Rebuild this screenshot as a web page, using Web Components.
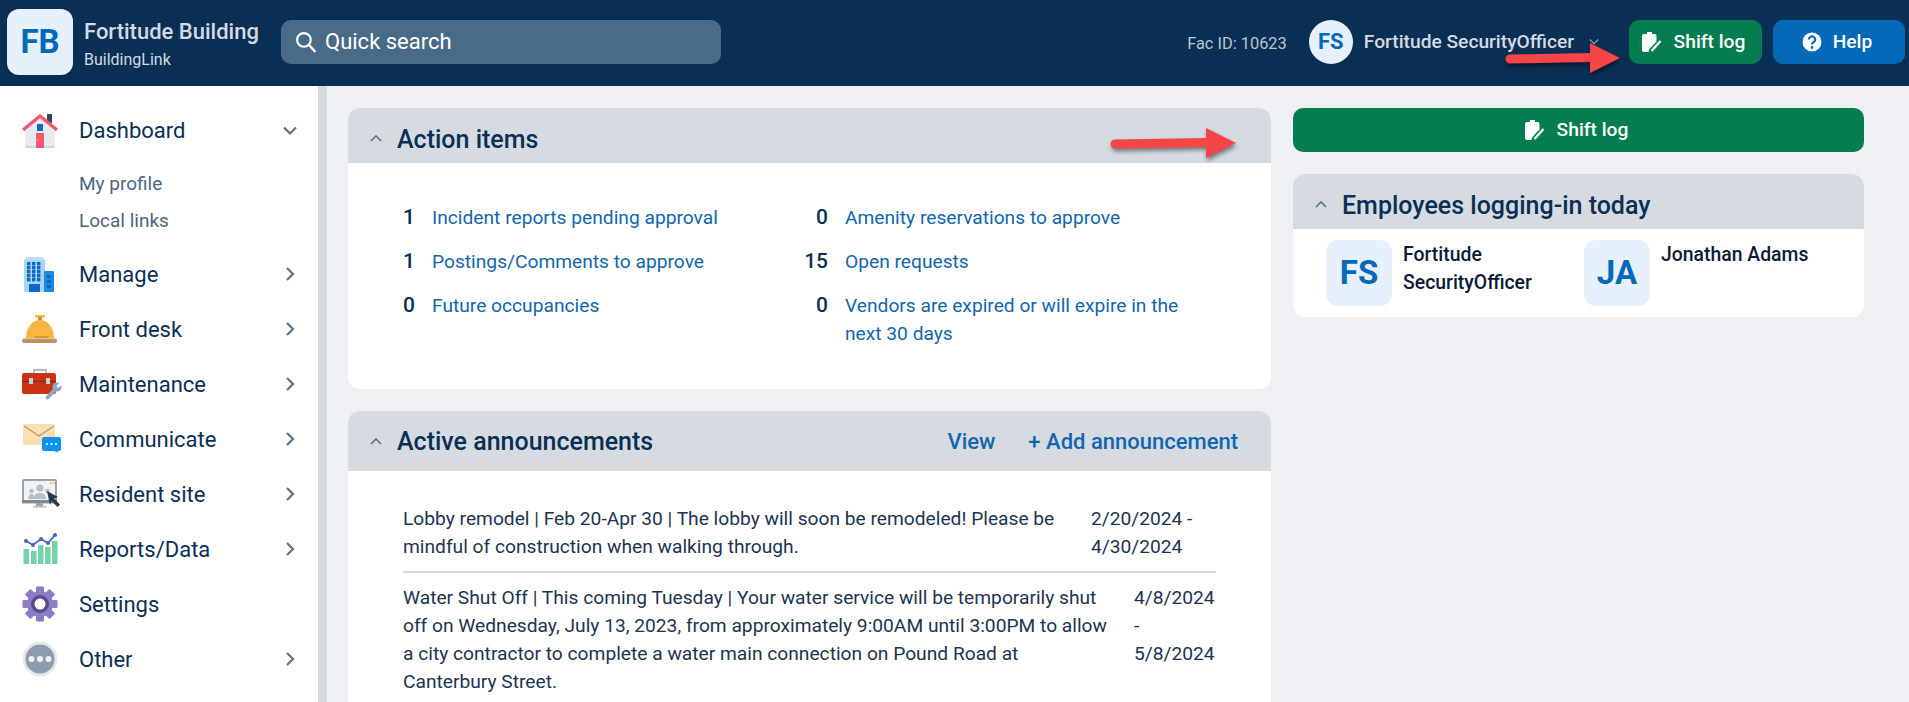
<!DOCTYPE html>
<html lang="en">
<head>
<meta charset="utf-8">
<title>BuildingLink dashboard</title>
<style>
  html, body { margin: 0; height: 702px; overflow: hidden; }
  body { font: 400 19.2px/28px Roboto, "Liberation Sans", sans-serif; color: #0a2f55; background: #eef0f4; }
</style>
</head>
<body>
<app-shell>
  <top-bar slot="top"></top-bar>
  <side-nav slot="side">
    <nav-item icon="house" open>Dashboard</nav-item>
    <sub-link first>My profile</sub-link>
    <sub-link last>Local links</sub-link>
    <nav-item icon="building" more>Manage</nav-item>
    <nav-item icon="bell" more>Front desk</nav-item>
    <nav-item icon="toolbox" more>Maintenance</nav-item>
    <nav-item icon="mail" more>Communicate</nav-item>
    <nav-item icon="monitor" more>Resident site</nav-item>
    <nav-item icon="chart" more>Reports/Data</nav-item>
    <nav-item icon="gear">Settings</nav-item>
    <nav-item icon="dots" more>Other</nav-item>
  </side-nav>

  <panel-card slot="left" heading="Action items">
    <action-grid>
      <action-item count="1">Incident reports pending approval</action-item>
      <action-item count="0">Amenity reservations to approve</action-item>
      <action-item count="1">Postings/Comments to approve</action-item>
      <action-item count="15">Open requests</action-item>
      <action-item count="0">Future occupancies</action-item>
      <action-item count="0">Vendors are expired or will expire in the next 30 days</action-item>
    </action-grid>
  </panel-card>

  <panel-card slot="left" heading="Active announcements" tall>
    <panel-link slot="actions">View</panel-link>
    <panel-link slot="actions">+ Add announcement</panel-link>
    <announce-list>
      <announce-row dates="2/20/2024 - 4/30/2024" datewidth="125" textwidth="678">Lobby remodel | Feb 20-Apr 30 | The lobby will soon be remodeled! Please be mindful of construction when walking through.</announce-row>
      <announce-row dates="4/8/2024 - 5/8/2024" datewidth="82" textwidth="710">Water Shut Off | This coming Tuesday | Your water service will be temporarily shut off on Wednesday, July 13, 2023, from approximately 9:00AM until 3:00PM to allow a city contractor to complete a water main connection on Pound Road at Canterbury Street.</announce-row>
    </announce-list>
  </panel-card>

  <shift-button slot="right" wide>Shift log</shift-button>
  <panel-card slot="right" heading="Employees logging-in today">
    <employee-list>
      <employee-chip initials="FS">Fortitude SecurityOfficer</employee-chip>
      <employee-chip initials="JA">Jonathan Adams</employee-chip>
    </employee-list>
  </panel-card>

  <red-arrow slot="over" length="114" style="left:1506px;top:38px"></red-arrow>
  <red-arrow slot="over" length="125" style="left:1111px;top:123px"></red-arrow>
</app-shell>

<script>
const ICONS = {
  house: `<path d="M3 15 18 3l15 12v18a2 2 0 0 1-2 2H5a2 2 0 0 1-2-2z" fill="#e6e9ee"/>
    <path d="M3 33h30a2 2 0 0 1-2 2H5a2 2 0 0 1-2-2z" fill="#c5d5e2"/>
    <rect x="25" y="1" width="5" height="9" fill="#33485c"/>
    <path d="M1 17 18 3l17 14" fill="none" stroke="#f4566a" stroke-width="3.4" stroke-linejoin="round"/>
    <rect x="15" y="11" width="6" height="7" rx=".6" fill="#0b6bc4"/>
    <rect x="14" y="20" width="8" height="15" fill="#f4566a"/>
    <circle cx="15.5" cy="27" r=".8" fill="#f5c542"/>`,
  building: `<g transform="translate(0 1)"><rect x="2" y="2" width="21" height="33" rx="1.5" fill="#a8d4f5"/>
    <rect x="3.5" y="0" width="18" height="3" rx="1" fill="#bfe0f8"/>
    <rect x="22" y="14" width="10" height="21" rx="1" fill="#1e88e5"/>
    <g fill="#1067c8">${[6, 10, 14, 18, 22].map(y => [5, 10, 15].map(x => `<rect x="${x}" y="${y - 1}" width="3.4" height="3.4"/>`).join("")).join("")}
    <rect x="7" y="27" width="11" height="8"/></g>
    <g fill="#1067c8"><rect x="25" y="18" width="4" height="3"/><rect x="25" y="23" width="4" height="3"/><rect x="25" y="28" width="4" height="3"/></g></g>`,
  bell: `<rect x="13" y="4" width="10" height="2.4" rx="1.2" fill="#f7b63f"/>
    <rect x="16" y="6" width="4" height="3.5" fill="#cf962a"/>
    <path d="M4 27c0-10 6-18 14-18s14 8 14 18z" fill="#f7b63f"/>
    <rect x="12" y="25" width="14" height="2" fill="#cf962a"/>
    <rect x="0" y="27.500" width="35" height="4.500" rx="2.200" fill="#bf9160"/>`,
  toolbox: `<path d="M12 7V4h12v3" fill="none" stroke="#a9bfd0" stroke-width="1.800"/>
    <rect x="0" y="7" width="34" height="21" rx="2" fill="#cb3310"/>
    <rect x="0" y="15" width="34" height="1" fill="#8f2409"/>
    <rect x="7" y="12" width="4" height="6" fill="#bcd4e6"/><rect x="24" y="12" width="4" height="6" fill="#bcd4e6"/>
    <path d="M25.500 31.500l8-8.500" stroke="#8aa9c4" stroke-width="4" stroke-linecap="round"/>
    <circle cx="35" cy="21" r="4.600" fill="#8aa9c4"/>
    <path d="M35.500 21l4-4" stroke="#fff" stroke-width="3"/>`,
  mail: `<rect x="1" y="3" width="32" height="21" rx="2" fill="#fadfb4"/>
    <path d="M2 5l15 10L32 5" fill="none" stroke="#b69668" stroke-width="1.200"/>
    <path d="M20 18a2 2 0 0 1 2-2h15a2 2 0 0 1 2 2v10a2 2 0 0 1-2 2h-2l2 2-5-2h-10a2 2 0 0 1-2-2z" fill="#0e92f0"/>
    <g fill="#fff"><circle cx="25" cy="23" r="1.100"/><circle cx="29.500" cy="23" r="1.100"/><circle cx="34" cy="23" r="1.100"/></g>`,
  monitor: `<g transform="translate(0 2)"><rect x="0" y="1" width="35" height="24" rx="2" fill="#98a5ad"/>
    <rect x="2" y="3" width="31" height="19" fill="#f0f2f4"/>
    <rect x="0" y="22" width="35" height="3.400" fill="#7d8a93"/>
    <rect x="14" y="25" width="7" height="3" fill="#98a5ad"/><rect x="11" y="28" width="13" height="1.500" fill="#b6c0c6"/>
    <g fill="#b5bfc6"><circle cx="18" cy="10" r="3.500"/><path d="M12 21c0-4 2.500-6 6-6s6 2 6 6z"/><circle cx="9.500" cy="13" r="2.300"/><path d="M6 21c0-3 1.500-5 3.500-5s3.500 2 3.500 5z"/><circle cx="25.500" cy="13" r="2.300"/></g>
    <path d="M25 13l11 6-4 1.500 6 6-2.500 2.500-6-6-1.500 4z" fill="#233a4f"/>
    <rect x="28" y="4.500" width="1.500" height="1" fill="#e86a5a"/><rect x="30" y="4.500" width="1.500" height="1" fill="#f0b848"/><rect x="32" y="4.500" width="1" height="1" fill="#66c07a"/></g>`,
  chart: `<g transform="translate(0 -2)"><g fill="#72d4aa"><rect x="1.500" y="20" width="5.500" height="15" rx=".8"/><rect x="9" y="22" width="5.500" height="13" rx=".8"/><rect x="16" y="16" width="5.500" height="19" rx=".8"/><rect x="23" y="18" width="5.500" height="17" rx=".8"/><rect x="30" y="12" width="5.500" height="23" rx=".8"/></g>
    <path d="M4 12l7 4 8-6 7 4 7-8" fill="none" stroke="#4a5fc4" stroke-width="1.800"/>
    <g fill="#4a5fc4"><circle cx="4" cy="12" r="2"/><circle cx="11" cy="16" r="2"/><circle cx="19" cy="10" r="2"/><circle cx="26" cy="14" r="2"/><circle cx="33" cy="6" r="2"/></g></g>`,
  gear: `<g fill="#8f7cc7"><circle cx="18" cy="18" r="13"/>${[0, 45, 90, 135, 180, 225, 270, 315].map(a => `<rect x="14" y="0.500" width="8" height="7" rx="1" transform="rotate(${a} 18 18)"/>`).join("")}</g>
    <circle cx="18" cy="18" r="9" fill="#5c4a8c"/><circle cx="18" cy="18" r="5.500" fill="#fff"/>`,
  dots: `<circle cx="18" cy="18" r="17.500" fill="#e6eaee"/><circle cx="18" cy="18" r="14.500" fill="#8c9cad"/>
    <path d="M5 14a14 14 0 0 1 26 0 14 14 0 0 0-26 0z" fill="#5f7286"/>
    <g fill="#eef1f4"><circle cx="9.500" cy="18" r="3"/><circle cx="18" cy="18" r="3"/><circle cx="26.500" cy="18" r="3"/></g>`
};

const CLIPBOARD = `<svg width="20" height="20" viewBox="0 0 20 20">
  <path d="M0 4a2 2 0 0 1 2-2h3V0h5v2h2.500a2 2 0 0 1 2 2v5.500L7 17.500 6.500 20H2a2 2 0 0 1-2-2z" fill="#fff"/>
  <path d="M9.500 19L18.500 9" stroke="#fff" stroke-width="2.400" fill="none"/></svg>`;

function shadow(el, css, html) {
  const root = el.attachShadow({ mode: "open" });
  root.innerHTML = `<style>${css}</style>${html}`;
  return root;
}

customElements.define("app-shell", class extends HTMLElement {
  constructor() {
    super();
    shadow(this, `
      :host { display: block; position: relative; width: 1909px; height: 702px; overflow: hidden; }
      .body { display: flex; height: 616px; }
      main { flex: 1; display: grid; grid-template-columns: 923px 571px; gap: 22px; padding: 22px 0 0 21px; align-content: start; }
      .col { display: flex; flex-direction: column; gap: 22px; }
    `, `
      <slot name="top"></slot>
      <div class="body">
        <slot name="side"></slot>
        <main>
          <div class="col"><slot name="left"></slot></div>
          <div class="col"><slot name="right"></slot></div>
        </main>
      </div>
      <slot name="over"></slot>
    `);
  }
});

customElements.define("top-bar", class extends HTMLElement {
  constructor() {
    super();
    shadow(this, `
      :host { display: flex; align-items: center; height: 86px; padding: 0 4px 2px 7px; background: #0a2f55; color: #d5dae2; box-sizing: border-box; }
      .logo { width: 66px; height: 66px; border-radius: 12px; background: #e6f1fd; color: #0469b9; font-size: 33px; font-weight: 700; display: flex; align-items: center; justify-content: center; }
      .brand { width: 185px; margin-left: 11px; padding-top: 6px; }
      .brand b { display: block; font-size: 22px; font-weight: 500; line-height: 26px; }
      .brand span { display: block; font-size: 16px; line-height: 24px; margin-top: 3px; }
      .search { width: 440px; height: 44px; margin-left: 12px; border-radius: 10px; background: #4a6b88; color: #fff; display: flex; align-items: center; gap: 8px; padding-left: 14px; box-sizing: border-box; font-size: 22px; }
      .fac { margin-left: auto; font-size: 16.400px; color: #b9c5d1; padding-top: 3px; }
      .user { width: 44px; height: 44px; border-radius: 50%; background: #e6f1fd; color: #0469b9; font-size: 22px; font-weight: 700; display: flex; align-items: center; justify-content: center; margin-left: 22px; }
      .name { margin-left: 11px; font-size: 19.200px; font-weight: 500; }
      .chev { margin: 0 30px 0 15px; display: block; }
      .help { margin-left: 11px; }
    `, `
      <div class="logo">FB</div>
      <div class="brand"><b>Fortitude Building</b><span>BuildingLink</span></div>
      <div class="search">
        <svg width="22" height="22" viewBox="0 0 21 21"><circle cx="8.500" cy="8.500" r="6.500" fill="none" stroke="#fff" stroke-width="2"/><path d="M13.500 13.500l6 6.500" stroke="#fff" stroke-width="2.200"/></svg>
        <span>Quick search</span>
      </div>
      <div class="fac">Fac ID: 10623</div>
      <div class="user">FS</div>
      <div class="name">Fortitude SecurityOfficer</div>
      <svg class="chev" width="10" height="8" viewBox="0 0 12 8"><path d="M1 1l5 5 5-5" fill="none" stroke="#8c9cad" stroke-width="1.600"/></svg>
      <shift-button>Shift log</shift-button>
      <help-button class="help">Help</help-button>
    `);
  }
});

customElements.define("shift-button", class extends HTMLElement {
  constructor() {
    super();
    shadow(this, `
      :host { display: flex; align-items: center; justify-content: center; gap: 12px; width: 133px; height: 44px; padding-right: 4px; box-sizing: border-box; border-radius: 10px; background: #067d50; color: #fff; font-size: 19.200px; font-weight: 500; }
      :host([wide]) { width: 571px; }
    `, `${CLIPBOARD}<slot></slot>`);
  }
});

customElements.define("help-button", class extends HTMLElement {
  constructor() {
    super();
    shadow(this, `
      :host { display: flex; align-items: center; justify-content: center; gap: 11px; width: 132px; height: 44px; padding-right: 4px; box-sizing: border-box; border-radius: 10px; background: #0469b9; color: #fff; font-size: 19.200px; font-weight: 500; }
    `, `<svg width="20" height="20" viewBox="0 0 20 20"><circle cx="10" cy="10" r="9.500" fill="#fff"/><path d="M6.800 7.500a3.200 3 0 1 1 4.800 2.600c-1 .6-1.600 1.100-1.600 2.400" fill="none" stroke="#0469b9" stroke-width="2.200"/><circle cx="10" cy="15.500" r="1.400" fill="#0469b9"/></svg><slot></slot>`);
  }
});

customElements.define("side-nav", class extends HTMLElement {
  constructor() {
    super();
    shadow(this, `
      :host { display: block; width: 318px; height: 616px; flex: none; background: #fff; border-right: 9px solid #d5dae2; padding-top: 17px; }
    `, `<slot></slot>`);
  }
});

customElements.define("nav-item", class extends HTMLElement {
  constructor() {
    super();
    const open = this.hasAttribute("open"), more = this.hasAttribute("more");
    const chev = open
      ? `<svg class="chev" width="14" height="10" viewBox="0 0 14 10"><path d="M1 1.500l6 6 6-6" fill="none" stroke="#5f7286" stroke-width="2.200"/></svg>`
      : more ? `<svg class="chev" width="14" height="14" viewBox="0 0 14 14"><path d="M4 1l6 6-6 6" fill="none" stroke="#5f7286" stroke-width="2.200"/></svg>` : "";
    shadow(this, `
      :host { display: flex; align-items: center; height: 55px; padding: 0 21px 0 22px; font-size: 22px; }
      svg.ic { width: 36px; height: 36px; flex: none; overflow: visible; }
      .label { margin-left: 21px; padding-top: 2px; }
      :host([open]) .label { padding-top: 1px; }
      .chev { margin-left: auto; }
    `, `<svg class="ic" viewBox="0 0 36 36">${ICONS[this.getAttribute("icon")]}</svg><span class="label"><slot></slot></span>${chev}`);
  }
});

customElements.define("sub-link", class extends HTMLElement {
  constructor() {
    super();
    shadow(this, `
      :host { display: block; height: 37px; line-height: 37px; padding-left: 79px; font-size: 19px; color: #4d6580; }
      :host([first]) { margin-top: 7px; }
      :host([last]) { margin-bottom: 7px; }
    `, `<slot></slot>`);
  }
});

customElements.define("panel-card", class extends HTMLElement {
  constructor() {
    super();
    shadow(this, `
      :host { display: block; background: #fff; border-radius: 12px; overflow: hidden; }
      header { display: flex; align-items: center; height: 55px; box-sizing: border-box; background: #d6dbe2; padding: 5px 33px 0 22px; }
      :host([tall]) header { height: 60px; padding-top: 0; }
      svg { flex: none; }
      h2 { margin: 3px auto 0 15px; font-size: 25px; font-weight: 500; color: #0a2f55; }
      :host([tall]) h2 { margin-top: 1px; }
      .actions { display: flex; gap: 33px; padding-top: 1px; }
    `, `
      <header>
        <svg width="12" height="8" viewBox="0 0 12 8"><path d="M1 7l5-5 5 5" fill="none" stroke="#5f7286" stroke-width="1.600"/></svg>
        <h2>${this.getAttribute("heading")}</h2>
        <div class="actions"><slot name="actions"></slot></div>
      </header>
      <slot></slot>
    `);
  }
});

customElements.define("panel-link", class extends HTMLElement {
  constructor() {
    super();
    shadow(this, `:host { display: block; font-size: 22px; font-weight: 500; color: #1166ad; }`, `<slot></slot>`);
  }
});

customElements.define("action-grid", class extends HTMLElement {
  constructor() {
    super();
    shadow(this, `
      :host { display: grid; grid-template-columns: 413px 413px; row-gap: 16px; padding: 41px 0 41px 37px; }
    `, `<slot></slot>`);
  }
});

customElements.define("action-item", class extends HTMLElement {
  constructor() {
    super();
    shadow(this, `
      :host { display: flex; gap: 17px; color: #1166ad; }
      b { width: 30px; flex: none; text-align: right; color: #0a2f55; font-weight: 500; font-size: 21px; line-height: 26px; }
      span { width: 350px; }
    `, `<b>${this.getAttribute("count")}</b><span><slot></slot></span>`);
  }
});

customElements.define("announce-list", class extends HTMLElement {
  constructor() {
    super();
    shadow(this, `:host { display: block; padding: 34px 55px 0; }`, `<slot></slot>`);
  }
});

customElements.define("announce-row", class extends HTMLElement {
  constructor() {
    super();
    shadow(this, `
      :host { display: flex; justify-content: space-between; padding-bottom: 10px; margin-bottom: 11px; border-bottom: 2px solid #d5dae2; color: #1c3450; }
      :host(:last-of-type) { border-bottom: 0; }
      .t { width: ${this.getAttribute("textwidth")}px; }
      .d { width: ${this.getAttribute("datewidth")}px; flex: none; }
    `, `<div class="t"><slot></slot></div><div class="d">${this.getAttribute("dates")}</div>`);
  }
});

customElements.define("employee-list", class extends HTMLElement {
  constructor() {
    super();
    shadow(this, `:host { display: grid; grid-template-columns: 258px 1fr; padding: 11px 0 11px 33px; }`, `<slot></slot>`);
  }
});

customElements.define("employee-chip", class extends HTMLElement {
  constructor() {
    super();
    shadow(this, `
      :host { display: flex; gap: 11px; font-size: 19.400px; font-weight: 500; color: #0b1b36; }
      .a { width: 66px; height: 66px; flex: none; border-radius: 12px; background: #e6f1fd; color: #0469b9; font-size: 33px; font-weight: 700; display: flex; align-items: center; justify-content: center; }
      .n { width: 170px; padding-top: 1px; }
    `, `<div class="a">${this.getAttribute("initials")}</div><div class="n"><slot></slot></div>`);
  }
});

customElements.define("red-arrow", class extends HTMLElement {
  constructor() {
    super();
    const w = +this.getAttribute("length"), h = w - 30;
    shadow(this, `
      :host { position: absolute; display: block; }
      svg { display: block; overflow: visible; filter: drop-shadow(1px 3px 2px rgba(0,0,0,.45)); }
    `, `<svg width="${w}" height="40" viewBox="0 0 ${w} 40"><path d="M4 16.500L${h} 15V5l30 15-30 15V24L4 25.500a4.500 4.500 0 0 1 0-9z" fill="#f54545"/></svg>`);
  }
});
</script>
</body>
</html>
